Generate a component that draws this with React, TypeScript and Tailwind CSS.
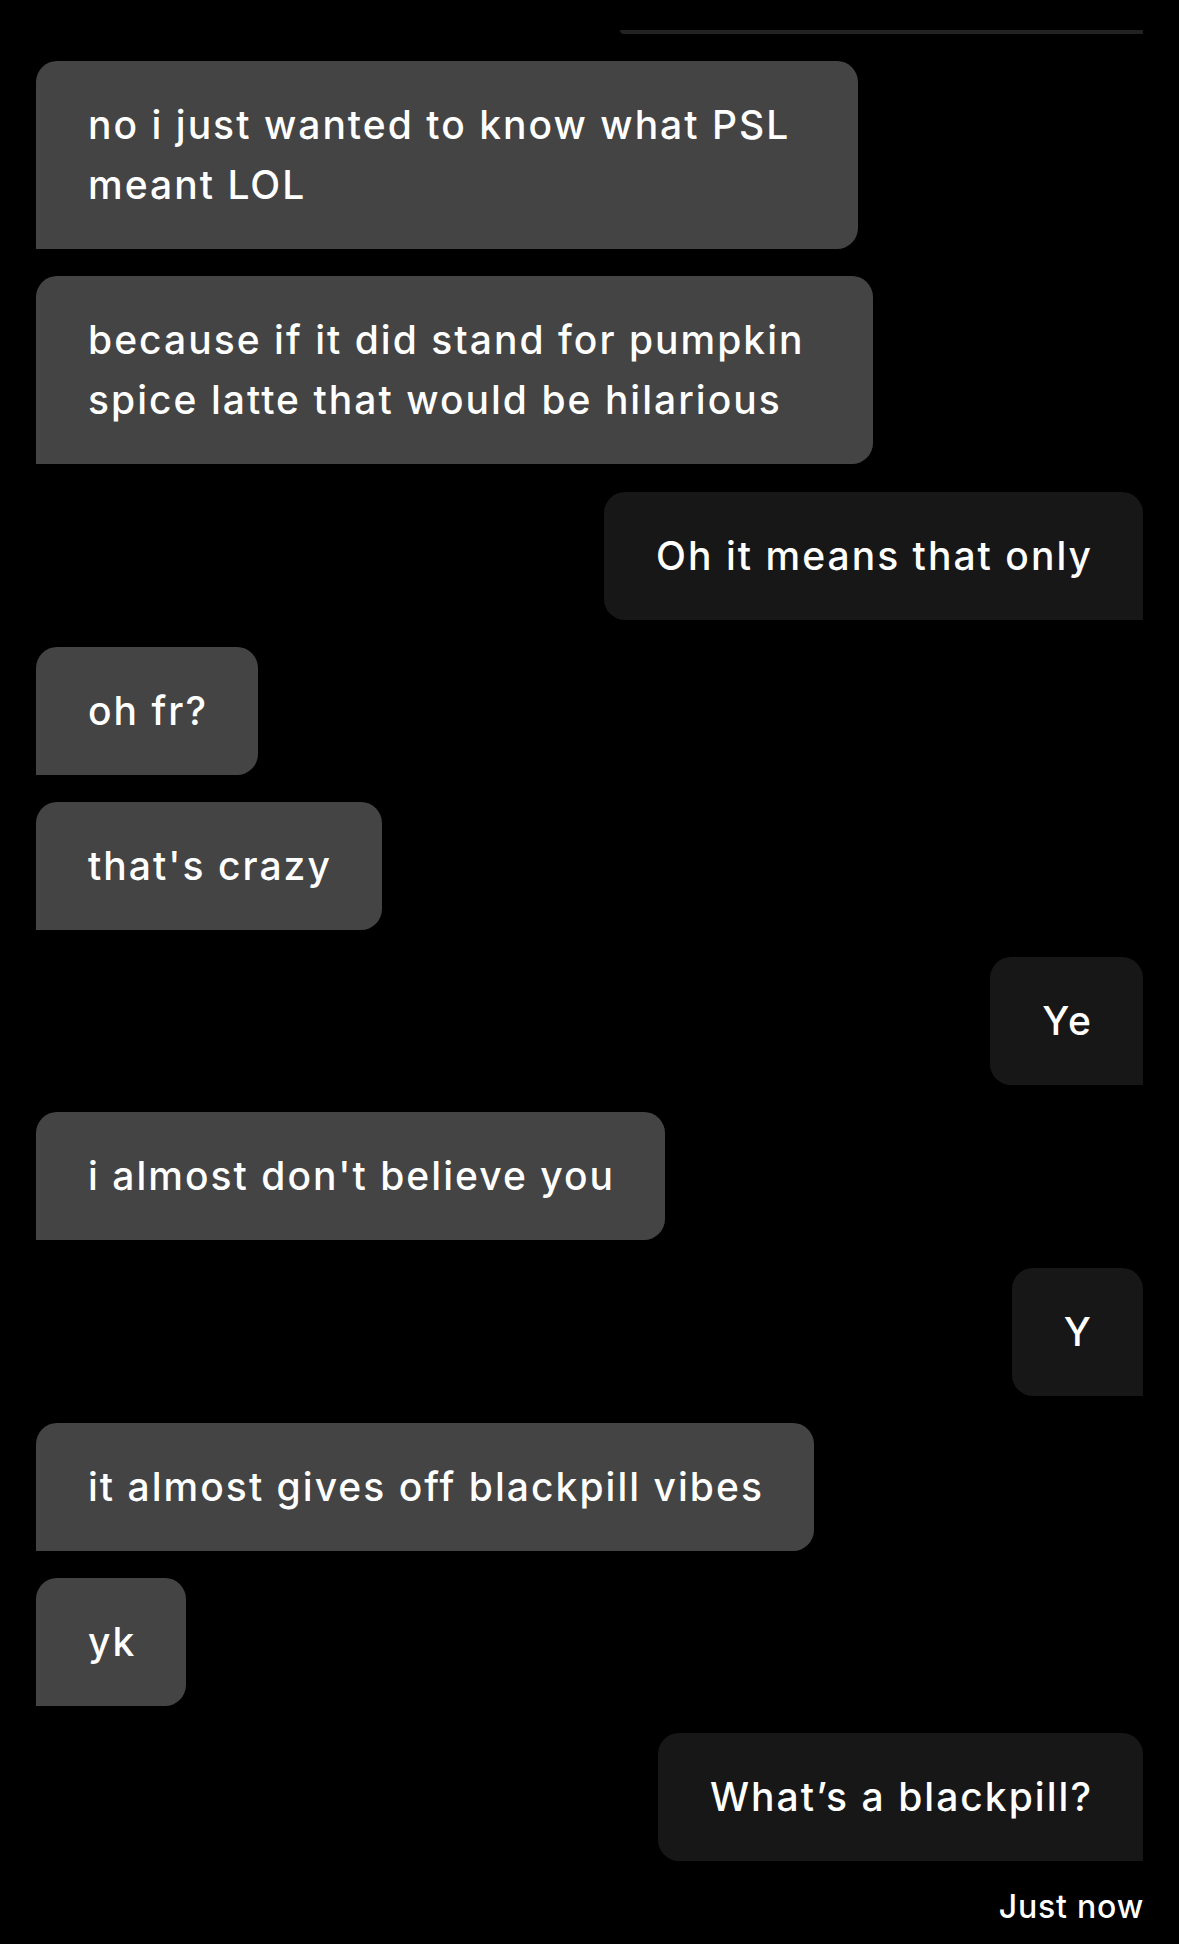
import React from "react";

const font = { fontFamily: "Inter, 'Open Sans', sans-serif" };

export default function App() {
  const msgs: { key: string; node: React.ReactNode; me: boolean; wide?: "a" | "b" }[] = [
    { key: "1", node: <>no i just wanted to know what PSL<br />meant LOL</>, me: false, wide: "a" },
    { key: "2", node: <>because if it did stand for pumpkin<br />spice latte that would be hilarious</>, me: false, wide: "b" },
    { key: "3", node: "Oh it means that only", me: true },
    { key: "4", node: "oh fr?", me: false },
    { key: "5", node: "that's crazy", me: false },
    { key: "6", node: "Ye", me: true },
    { key: "7", node: "i almost don't believe you", me: false },
    { key: "8", node: "Y", me: true },
    { key: "9", node: "it almost gives off blackpill vibes", me: false },
    { key: "10", node: "yk", me: false },
    { key: "11", node: "What’s a blackpill?", me: true },
  ];

  return (
    <div className="w-full min-h-[1944px] bg-black px-[36px] pt-[30px] pb-[20px] text-white" style={font}>
      <div className="flex flex-col gap-[27.2px]">
        <div className="self-end w-[523px] h-[4px] bg-[#222222] rounded-bl-[4px]" />
        {msgs.map((m) => (
          <div
            key={m.key}
            className={
              (m.me
                ? "self-end bg-[#171717] rounded-[21px] rounded-br-none"
                : "self-start bg-[#444444] rounded-[21px] rounded-bl-none") +
              " pl-[52px] pr-[50px] py-[34px] text-[39px] leading-[60px] tracking-[0.052em] font-[550] whitespace-nowrap " +
              (m.wide === "a" ? "w-[822px]" : m.wide === "b" ? "w-[837px]" : "")
            }
          >
            {m.node}
          </div>
        ))}
      </div>
      <div className="text-right text-[32px] leading-[40px] tracking-[0.025em] font-[550] mt-[26px] -mr-[1px]">Just now</div>
    </div>
  );
}
